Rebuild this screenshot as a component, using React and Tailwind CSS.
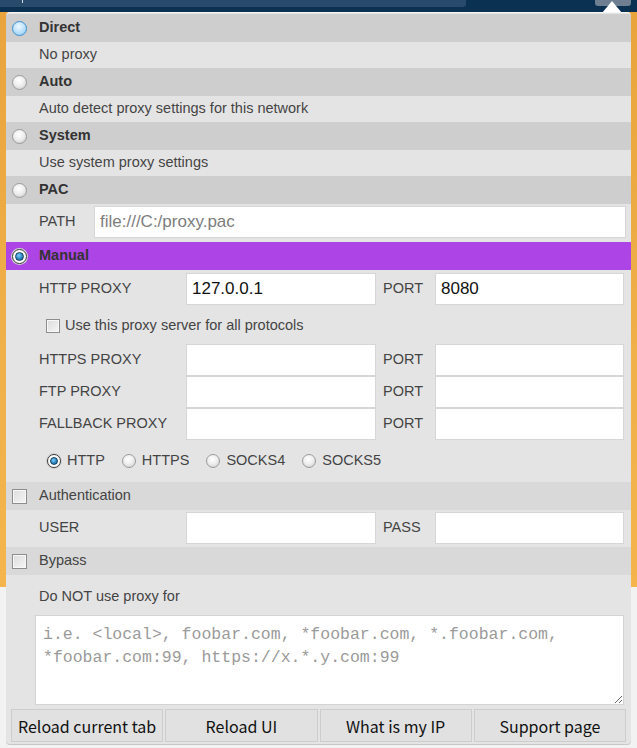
import React from "react";

function Radio({ state = "off", size = 15 }) {
  const dim = size === 15 ? "w-[15px] h-[15px]" : "w-[14px] h-[14px]";
  if (state === "on") {
    return (
      <span className={`${dim} shrink-0 rounded-full border border-[#3a3a3a] bg-white flex items-center justify-center shadow-[0_0_0_1px_#d0d0d0]`}>
        <span className={`${size === 15 ? "w-[9px] h-[9px]" : "w-[8px] h-[8px]"} rounded-full border border-[#14405e] bg-[radial-gradient(circle_at_40%_35%,#7fd0f7_0%,#2a86c4_55%,#14557f_100%)]`} />
      </span>
    );
  }
  if (state === "hover") {
    return (
      <span className={`${dim} shrink-0 rounded-full border border-[#3f8fcc] bg-[radial-gradient(circle_at_45%_35%,#eef8ff_0%,#c2e4fb_45%,#86c6f0_100%)]`} />
    );
  }
  return (
    <span className={`${dim} shrink-0 rounded-full border border-[#9b9b9b] bg-[radial-gradient(circle_at_45%_35%,#ffffff_0%,#efefef_45%,#c8c8c8_100%)]`} />
  );
}

function Check({ size = 15 }) {
  const dim = size === 15 ? "w-[15px] h-[15px]" : "w-[14px] h-[14px]";
  return (
    <span className={`${dim} shrink-0 border border-[#8d8d8d] bg-[linear-gradient(135deg,#dcdcdc,#f6f6f6)] shadow-[inset_0_0_0_1px_#f8f8f8]`} />
  );
}

function Header({ children, bg = "bg-[#cecece]", control, bold = true }) {
  return (
    <div className={`h-[28px] flex items-center pl-[6px] gap-[12px] ${bg}`}>
      {control}
      <span className={bold ? "font-bold text-[#333]" : "text-[#444]"}>{children}</span>
    </div>
  );
}

function Sub({ children }) {
  return <div className="h-[26px] flex items-center pl-[33px] text-[#444]">{children}</div>;
}

const inputCls =
  "h-[32px] w-full border border-[#d6d6d6] bg-white px-[5px] text-[17px] text-[#111] outline-none placeholder:text-[#7d7d7d]";

function ProxyRow({ label, value, portValue, portLabel = "PORT" }) {
  return (
    <div className="grid grid-cols-[147px_190px_59px_189px] items-center pl-[33px]">
      <span className="text-[#444]">{label}</span>
      <input className={inputCls} defaultValue={value} readOnly />
      <span className="pl-[7px] text-[#444]">{portLabel}</span>
      <input className={inputCls} defaultValue={portValue} readOnly />
    </div>
  );
}

export default function App() {
  return (
    <div className="relative w-[637px] h-[748px] overflow-hidden bg-[#f2f2f2] [font-family:'Liberation_Sans',Arial,sans-serif] text-[14.5px]">
      {/* background page */}
      <div className="absolute inset-x-0 top-0 h-[12px] bg-[#0b3152]">
        <div className="absolute left-0 top-0 w-[466px] h-[7px] bg-[#284b6c] rounded-br-[3px]" />
        <div className="absolute left-[22px] top-0 w-[1px] h-[3px] bg-white/80" />
        <div className="absolute left-[595px] top-0 w-[36px] h-[6px] bg-[#6d7f91] rounded-b-[3px]" />
      </div>
      <div className="absolute inset-x-0 top-[12px] h-[575px] bg-[linear-gradient(180deg,#e9a43c,#f0b04a_60%,#f5b54c)]" />
      <svg className="absolute left-[602px] top-0" width="20" height="13" viewBox="0 0 20 13">
        <polygon points="10,1 20,13 0,13" fill="#ffffff" />
      </svg>

      {/* popup panel */}
      <div className="relative mt-[12px] ml-[6px] w-[625px] pt-[1px] pb-[2px] bg-[#e4e4e4] border-t border-[#f4f4f4] rounded-[4px] overflow-hidden shadow-[0_1px_0_#c8c8c8]">
        <Header control={<Radio state="hover" />}>Direct</Header>
        <Sub>No proxy</Sub>
        <Header control={<Radio />}>Auto</Header>
        <Sub>Auto detect proxy settings for this network</Sub>
        <Header control={<Radio />}>System</Header>
        <Sub>Use system proxy settings</Sub>
        <Header control={<Radio />}>PAC</Header>
        <div className="h-[38px] flex pt-[2px] pl-[33px] pr-[5px]">
          <span className="w-[55px] h-[32px] flex items-center text-[#444]">PATH</span>
          <input className={`${inputCls} flex-1 px-[4px]`} placeholder="file:///C:/proxy.pac" readOnly />
        </div>
        <Header bg="bg-[#ad44e6]" control={<Radio state="on" />}>Manual</Header>

        <div className="pt-[3px]">
          <ProxyRow label="HTTP PROXY" value="127.0.0.1" portValue="8080" />
        </div>
        <div className="h-[39px] flex items-center pl-[40px] gap-[5px] pt-[2px] text-[#444]">
          <Check size={14} />
          <span>Use this proxy server for all protocols</span>
        </div>
        <ProxyRow label="HTTPS PROXY" />
        <ProxyRow label="FTP PROXY" />
        <ProxyRow label="FALLBACK PROXY" />
        <div className="h-[42px] flex items-center pl-[41px] gap-[17px] text-[14.5px] text-[#444]">
          <label className="flex items-center gap-[6px]"><Radio state="on" size={14} />HTTP</label>
          <label className="flex items-center gap-[6px]"><Radio size={14} />HTTPS</label>
          <label className="flex items-center gap-[6px]"><Radio size={14} />SOCKS4</label>
          <label className="flex items-center gap-[6px]"><Radio size={14} />SOCKS5</label>
        </div>

        <Header bg="bg-[#d9d9d9]" bold={false} control={<Check />}>Authentication</Header>
        <div className="pt-[2px] pb-[3px]">
          <ProxyRow label="USER" portLabel="PASS" />
        </div>
        <Header bg="bg-[#d9d9d9]" bold={false} control={<Check />}>Bypass</Header>
        <div className="h-[40px] flex items-center pl-[33px] pt-[3px] text-[#444]">Do NOT use proxy for</div>
        <div className="pl-[29px] pr-[7px]">
          <textarea
            className="block w-full h-[90px] border border-[#d3d3d3] bg-white px-[7px] py-[7px] [font-family:'Liberation_Mono',monospace] text-[16.5px] leading-[23px] text-[#333] placeholder:text-[#9a9a9a] outline-none"
            placeholder="i.e. <local>, foobar.com, *foobar.com, *.foobar.com, *foobar.com:99, https://x.*.y.com:99"
          />
        </div>
        <div className="grid grid-cols-4 gap-[2px] px-[5px] mt-[4px]">
          {["Reload current tab", "Reload UI", "What is my IP", "Support page"].map((t) => (
            <button
              key={t}
              className="h-[33px] border border-[#cdcdcd] bg-[#e1e1e1] text-[#111] text-[16px] [font-family:'Noto_Sans_CJK_SC','Noto_Sans',sans-serif] flex items-center justify-center"
            >
              {t}
            </button>
          ))}
        </div>
      </div>
    </div>
  );
}
